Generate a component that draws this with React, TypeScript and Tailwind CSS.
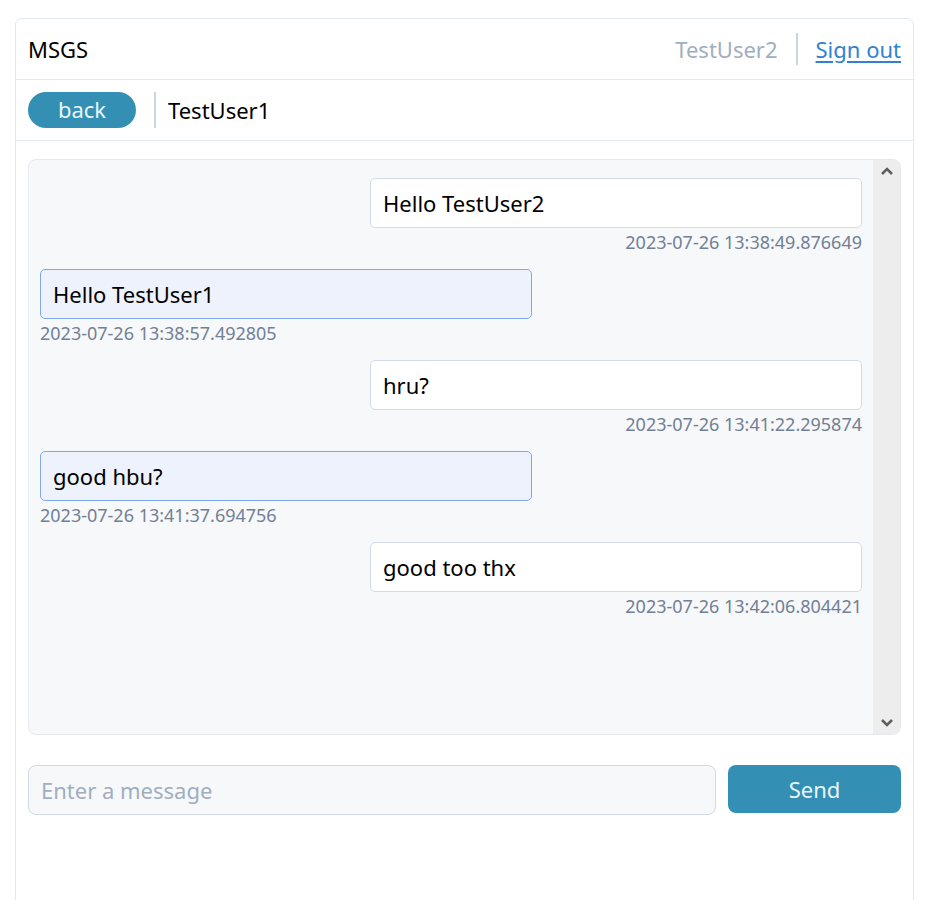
import React from "react";

const msgs = [
  { mine: true, text: "Hello TestUser2", ts: "2023-07-26 13:38:49.876649" },
  { mine: false, text: "Hello TestUser1", ts: "2023-07-26 13:38:57.492805" },
  { mine: true, text: "hru?", ts: "2023-07-26 13:41:22.295874" },
  { mine: false, text: "good hbu?", ts: "2023-07-26 13:41:37.694756" },
  { mine: true, text: "good too thx", ts: "2023-07-26 13:42:06.804421" },
];

export default function App() {
  return (
    <div
      className="bg-white w-[929px] h-[900px] overflow-hidden pt-[18px] px-[15px]"
      style={{ fontFamily: '"Noto Sans", "Open Sans", sans-serif' }}
    >
      <div className="border border-[#e2e8f0] rounded-t-[7px] h-[900px] flex flex-col">
        <div className="h-[61px] px-3 flex items-center justify-between border-b border-[#e2e8f0]">
          <span className="text-[22px] text-black">MSGS</span>
          <div className="flex items-center">
            <span className="text-[22px] text-[#a0aec0]">TestUser2</span>
            <div className="w-[2px] h-[32px] bg-[#cbd5e0] mx-[18px]" />
            <a href="#" className="text-[22px] text-[#3182ce] underline underline-offset-[3px]">Sign out</a>
          </div>
        </div>
        <div className="h-[61px] px-3 flex items-center border-b border-[#e2e8f0]">
          <button className="w-[108px] h-[36px] rounded-full bg-[#3390b4] text-[#eaf6fa] text-[22px] flex items-center justify-center leading-none pb-[2px]">
            back
          </button>
          <div className="w-[2px] h-[36px] bg-[#cbd5e0] ml-[18px] mr-[12px]" />
          <span className="text-[22px] text-black">TestUser1</span>
        </div>
        <div className="px-3 pt-[18px]">
          <div className="h-[576px] border border-[#e6e9ee] rounded-[8px] bg-[#f7f8fa] flex overflow-hidden">
            <div className="flex-1 pl-[11px] pr-[11px] pt-[18px] flex flex-col gap-[13px]">
              {msgs.map((m, i) => (
                <div key={i} className={`flex flex-col ${m.mine ? "items-end" : "items-start"}`}>
                  <div
                    className={`w-[492px] h-[50px] rounded-[5px] border px-[12px] flex items-center text-[22px] text-black ${
                      m.mine ? "bg-white border-[#d3dbe6]" : "bg-[#eef2fc] border-[#7ea8ea]"
                    }`}
                  >
                    {m.text}
                  </div>
                  <div className="text-[18px] leading-[28px] text-[#718096]">{m.ts}</div>
                </div>
              ))}
            </div>
            <div className="w-[27px] bg-[#ededed] flex flex-col justify-between items-center py-[6px]">
              <svg width="14" height="10" viewBox="0 0 14 10">
                <path d="M2 8 L7 3 L12 8" fill="none" stroke="#5f5f5f" strokeWidth="2.6" />
              </svg>
              <svg width="14" height="10" viewBox="0 0 14 10">
                <path d="M2 2 L7 7 L12 2" fill="none" stroke="#5f5f5f" strokeWidth="2.6" />
              </svg>
            </div>
          </div>
          <div className="flex gap-3 mt-[30px]">
            <div className="w-[688px] h-[50px] rounded-[8px] border border-[#cfd8e3] bg-[#f7f8fa] flex items-center px-[12px]">
              <input
                className="w-full bg-transparent outline-none text-[22px] placeholder:text-[#a0aec0]"
                placeholder="Enter a message"
              />
            </div>
            <button className="flex-1 h-[48px] rounded-[8px] bg-[#3390b4] text-[#eaf6fa] text-[22px]">Send</button>
          </div>
        </div>
      </div>
    </div>
  );
}
